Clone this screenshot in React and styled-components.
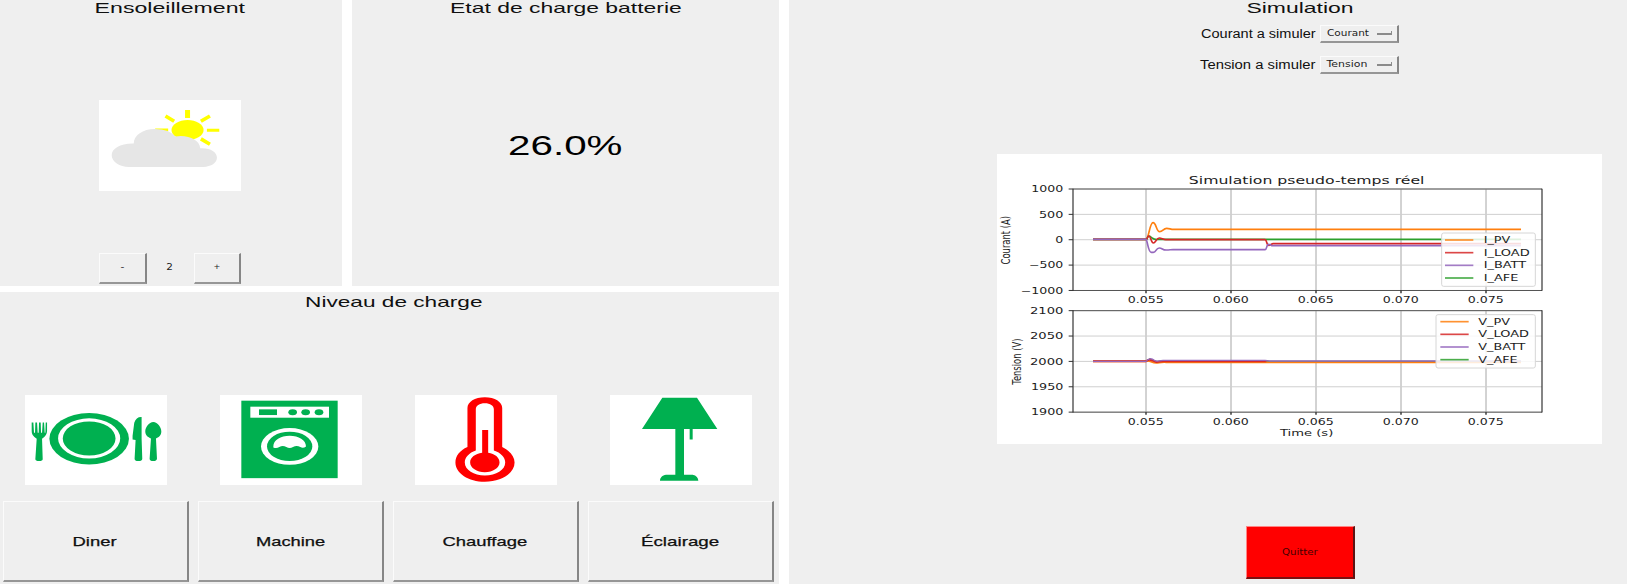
import React, { useLayoutEffect, useRef, useState } from "react";
import styled, { createGlobalStyle } from "styled-components";

const GREEN = "#00b050";
const COLORS = { orange: "#ff7f0e", red: "#d62728", purple: "#9467bd", green: "#2ca02c" };

const GlobalStyle = createGlobalStyle`
  *, *::before, *::after { box-sizing: border-box; }
  body { margin: 0; background: #fff; }
`;

const Screen = styled.main`
  display: grid;
  grid-template-columns: 779.3px 1fr;
  column-gap: 9.7px;
  width: 1627px;
  height: 587px;
  padding-bottom: 3px;
  overflow: hidden;
  background: #fff;
  color: #101010;
  font-family: "Liberation Sans", Arial, sans-serif;
`;

const LeftColumn = styled.div`
  display: grid;
  grid-template-rows: 286px 1fr;
  row-gap: 6px;
`;

const TopRow = styled.div`
  display: grid;
  grid-template-columns: 342px 1fr;
  column-gap: 9.7px;
`;

const Panel = styled.section`
  display: flex;
  flex-direction: column;
  align-items: center;
  background: #efefef;
  min-width: 0;
`;

const SunPanel = styled(Panel)`
  padding-right: 2px;
`;

const SimulationPanel = styled(Panel)`
  padding-left: 184px;
`;

const LoadPanel = styled(Panel)`
  align-items: stretch;
`;

const TextBox = styled.span`
  display: flex;
  justify-content: center;
  align-items: center;
  flex: none;
  width: ${(p) => p.$width}px;
  font-size: ${(p) => p.$size}px;
  line-height: ${(p) => p.$line || p.$size + 2}px;
  white-space: nowrap;
`;

const TextRun = styled.span`
  flex: none;
`;

/* Text drawn with wide letterforms: the run is stretched to fill its width. */
function WideText({ width, size, line, className, children }) {
  const run = useRef(null);
  const [scale, setScale] = useState(1);
  useLayoutEffect(() => {
    setScale(width / run.current.offsetWidth);
  }, [width, size, children]);
  return (
    <TextBox className={className} $width={width} $size={size} $line={line}>
      <TextRun ref={run} style={{ transform: `scaleX(${scale})` }}>{children}</TextRun>
    </TextBox>
  );
}

const Title = styled(WideText)`
  height: 16px;
  padding-bottom: 1.5px;
`;

const SmallText = styled(WideText)`
  font-family: "DejaVu Sans", sans-serif;
  color: ${(p) => p.$color || "#1c1c1c"};
`;

const ButtonText = styled(WideText)`
  padding-top: 1px;
  -webkit-text-stroke: 0.25px #101010;
`;

const Picture = styled.svg`
  display: block;
  flex: none;
  width: 142px;
  height: 90.5px;
  background: #fff;
`;

const SunPicture = styled(Picture)`
  margin-top: 84px;
`;

const Button = styled.button`
  display: flex;
  align-items: center;
  justify-content: center;
  padding: 0;
  border: solid;
  border-width: 1px 2px 2px 1px;
  border-color: #fbfbfb #868686 #969696 #fbfbfb;
  background: #efefef;
  color: inherit;
  font-family: inherit;
`;

const Stepper = styled.div`
  display: flex;
  align-items: center;
  justify-content: space-between;
  width: 142px;
  height: 31px;
  margin-top: 62px;
`;

const StepButton = styled(Button)`
  width: 47.5px;
  height: 31px;
`;

const BatteryValue = styled(WideText)`
  margin: auto 0;
  padding-bottom: 9px;
  color: #000;
`;

const LoadTitle = styled(Title)`
  margin: 2px 0 0 304.5px;
`;

const LoadGrid = styled.div`
  display: grid;
  grid-template-columns: repeat(4, 186px);
  column-gap: 9.2px;
  margin: 84.5px 0 0 2.5px;
`;

const LoadItem = styled.div`
  display: flex;
  flex-direction: column;
  align-items: center;
  gap: 15.5px;
`;

const LoadButton = styled(Button)`
  width: 186px;
  height: 81px;
`;

const OptionRow = styled.label`
  display: flex;
  align-items: center;
  gap: 5px;
  height: 18px;
  margin-top: ${(p) => p.$top}px;
`;

const OptionMenu = styled(Button)`
  justify-content: space-between;
  width: 79px;
  height: 17.5px;
  padding: 0 5px;
`;

const MenuMark = styled.span`
  width: 15px;
  height: 4px;
  margin-bottom: 1px;
  border: solid;
  border-width: 0 1.5px 2px 0;
  border-color: transparent #8b8b8b #8b8b8b transparent;
`;

const Chart = styled.svg`
  display: block;
  flex: none;
  width: 605px;
  height: 290px;
  margin-top: 79.5px;
  background: #fff;
  font-family: "DejaVu Sans", sans-serif;
`;

const QuitButton = styled(Button)`
  width: 109px;
  height: 53px;
  margin-top: 82.5px;
  margin-left: 1px;
  background: #f00;
  border-color: #ff8585 #5c1515 #7a1010 #ff8585;
`;

function SunCloud() {
  return (
    <SunPicture viewBox="298 300 425 272" preserveAspectRatio="none">
      <ellipse cx="563" cy="390" rx="48" ry="30" fill="#ff0" />
      <g stroke="#ff0">
        <path d="M563 330V354" strokeWidth="15" />
        <path d="M466 390H505M621 391H658" strokeWidth="9" />
        <path d="M497 348L523 364M630 348L603 364M603 417L630 433" strokeWidth="11" />
      </g>
      <path
        d="M388 501C359 501 336 485 336 466C336 446 362 430 402 431C402 406 429 387 465 387C493 387 517 396 526 410C563 403 600 420 601 445C630 443 651 456 651 473C651 489 634 501 610 501Z"
        fill="#e6e6e6"
      />
    </SunPicture>
  );
}

function DinnerPicture() {
  return (
    <Picture viewBox="74 342 425 271" preserveAspectRatio="none">
      <g fill={GREEN}>
        <ellipse cx="266" cy="473" rx="119" ry="77" />
        <path d="M94 424H99L101 455H104L105 424H110L112 455H115L116 424H121L122 455H125L127 424H131L133 455H135L136 424H140V450Q140 464 125 473L127 534Q127 540 116 540Q105 540 105 534L109 473Q93 464 94 450Z" />
        <path d="M423 408V472L425 533Q425 540 413 540Q402 540 402 533L405 477L396 475V464L401 425Q407 407 423 408Z" />
        <path d="M458 423C471 423 482 439 482 451C482 463 473 469 466 472L469 533Q468 540 458 540Q447 540 447 533L451 472C442 468 434 462 434 451C434 439 445 423 458 423Z" />
      </g>
      <path
        d="M173 472a93 60 0 1 0 186 0a93 60 0 1 0 -186 0ZM187 472a79 51 0 1 0 158 0a79 51 0 1 0 -158 0Z"
        fill="#fff"
        fillRule="evenodd"
      />
    </Picture>
  );
}

function WasherPicture() {
  return (
    <Picture viewBox="657 342 426 271" preserveAspectRatio="none">
      <rect x="721" y="359" width="289" height="232" fill={GREEN} />
      <rect x="748" y="377" width="236" height="33" fill="#fff" />
      <g fill={GREEN}>
        <rect x="774" y="385" width="54" height="17" />
        <ellipse cx="875" cy="394" rx="13" ry="9" />
        <ellipse cx="914" cy="394" rx="13" ry="9" />
        <ellipse cx="954" cy="394" rx="13" ry="9" />
      </g>
      <ellipse cx="866" cy="496" rx="86" ry="55" fill="#fff" />
      <ellipse cx="866" cy="496" rx="68" ry="44" fill={GREEN} />
      <path d="M817 496C817 477 839 464 866 464C893 464 915 477 915 496Q907 502 898 498Q887 491 876 498Q866 504 856 498Q845 492 835 498Q826 503 817 499Z" fill="#fff" />
    </Picture>
  );
}

function HeatPicture() {
  return (
    <Picture viewBox="74 342 425 271" preserveAspectRatio="none">
      <path
        d="M231 381C231 363 253 349 283 349C313 349 335 363 335 381V498C357 509 372 525 372 544C372 576 333 602 283 602C234 602 195 576 195 544C195 525 208 508 231 498Z"
        fill="#f00"
      />
      <path
        d="M256 385C256 374 267 367 283 367C299 367 310 374 310 385V508C331 515 344 528 344 544C344 566 317 583 283 583C250 583 223 566 223 544C223 528 236 515 256 508Z"
        fill="#fff"
      />
      <path d="M275 447H293V515C313 518 327 529 327 544C327 560 307 573 283 573C259 573 239 560 239 544C239 529 254 518 275 515Z" fill="#f00" />
    </Picture>
  );
}

function LampPicture() {
  return (
    <Picture viewBox="660 342 426 271" preserveAspectRatio="none">
      <path
        d="M817 350H921L982 444H908V475H899V444H882V581H908C919 583 925 590 925 599H810C810 590 817 582 828 581H856V444H756Z"
        fill={GREEN}
      />
    </Picture>
  );
}

const loads = [
  { name: "Diner", width: 44, Art: DinnerPicture },
  { name: "Machine", width: 69, Art: WasherPicture },
  { name: "Chauffage", width: 85, Art: HeatPicture },
  { name: "Éclairage", width: 78, Art: LampPicture },
];

const xTicks = [
  [469, "0.055"],
  [724, "0.060"],
  [979, "0.065"],
  [1234, "0.070"],
  [1489, "0.075"],
];

function ChartText({ x, y, width, size = 25, anchor = "middle", children, ...rest }) {
  return (
    <text x={x} y={y} fontSize={size} textAnchor={anchor} textLength={width} lengthAdjust="spacingAndGlyphs" fill="#1c1c1c" {...rest}>
      {children}
    </text>
  );
}

function Plot({ top, ticks, lines, legend }) {
  const bottom = top + 304.5;
  const step = 76.1;
  return (
    <g>
      {xTicks.map(([x]) => (
        <path key={x} d={`M${x} ${top}V${bottom}`} stroke="#a6a6a6" strokeWidth="3" />
      ))}
      {ticks.map((t, i) => (
        <path key={t.label} d={`M250 ${top + i * step}H1657`} stroke="#cfcfcf" strokeWidth="3" />
      ))}
      <g fill="none" strokeLinejoin="round">
        {lines.map((l, i) => (
          <path key={i} d={l.d} stroke={l.color} strokeWidth={l.width || 5} />
        ))}
      </g>
      <path d={`M250 ${top}H1657M250 ${bottom}H1657`} stroke="#555" strokeWidth="3" />
      <path d={`M250 ${top - 1}V${bottom + 1}M1657 ${top - 1}V${bottom + 1}`} stroke="#2a2a2a" strokeWidth="3.4" />
      {ticks.map((t, i) => (
        <g key={t.label}>
          <path d={`M237 ${top + i * step}H250`} stroke="#333" strokeWidth="3" />
          <ChartText x={221} y={top + i * step + 9.5} width={t.width} anchor="end">{t.label}</ChartText>
        </g>
      ))}
      {xTicks.map(([x, label]) => (
        <g key={x}>
          <path d={`M${x} ${bottom}V${bottom + 8}`} stroke="#222" strokeWidth="4" />
          <ChartText x={x - 1} y={bottom + 37.5} width={108}>{label}</ChartText>
        </g>
      ))}
      <rect x={legend.x} y={legend.y} width={1637 - legend.x} height="160" rx="6" fill="#fff" fillOpacity=".85" stroke="#d6d6d6" strokeWidth="3" />
      {legend.items.map((item, i) => (
        <g key={item.label}>
          <path d={`M${legend.lineX} ${legend.y + 21 + i * 38}h85`} stroke={item.color} strokeWidth="5" opacity=".85" />
          <ChartText x={legend.textX} y={legend.y + 30 + i * 38} width={item.width} size={26} anchor="start">{item.label}</ChartText>
        </g>
      ))}
    </g>
  );
}

const currentPlot = {
  top: 115,
  ticks: [
    { label: "1000", width: 96 },
    { label: "500", width: 73 },
    { label: "0", width: 24 },
    { label: "−500", width: 103 },
    { label: "−1000", width: 128 },
  ],
  lines: [
    { color: COLORS.orange, d: "M310 266H469C477 266 480 216 490 216C500 216 500 243 510 243C519 243 521 233 531 233C541 233 543 237 556 236H1594" },
    { color: COLORS.green, d: "M310 266H471C477 252 480 255 487 262Q495 268 508 266H1594" },
    { color: COLORS.red, d: "M310 266H469C475 266 472 256 477 256C484 256 484 277 491 277C498 277 500 262 509 262C517 262 520 268 530 267H826C832 267 830 284 838 284C845 284 845 277 853 279H1594" },
    { color: COLORS.purple, d: "M310 266H469C474 270 475 305 485 305H491C500 305 498 292 509 292C518 292 519 299 531 298C542 298 544 296 556 297H826C833 297 829 280 838 281C845 281 843 287 853 285H1594" },
  ],
  legend: {
    x: 1356,
    y: 247,
    lineX: 1366,
    textX: 1482,
    items: [
      { label: "I_PV", color: COLORS.orange, width: 80 },
      { label: "I_LOAD", color: COLORS.red, width: 138 },
      { label: "I_BATT", color: COLORS.purple, width: 127 },
      { label: "I_AFE", color: COLORS.green, width: 104 },
    ],
  },
};

const voltagePlot = {
  top: 480,
  ticks: [
    { label: "2100", width: 100 },
    { label: "2050", width: 100 },
    { label: "2000", width: 100 },
    { label: "1950", width: 97 },
    { label: "1900", width: 97 },
  ],
  lines: [
    { color: COLORS.green, d: "M310 632H469L480 625L498 632H1594", width: 4 },
    { color: COLORS.orange, d: "M310 632H469C480 628 484 636 500 637C511 636 515 634 530 635H1594" },
    { color: COLORS.red, d: "M310 632H469C480 622 485 630 500 634C512 634 512 631 526 632H830", width: 6 },
    { color: COLORS.purple, d: "M310 632H469C475 624 484 621 494 629C502 635 506 629 520 629H826L840 631H1594", width: 4 },
  ],
  legend: {
    x: 1339,
    y: 492,
    lineX: 1352,
    textX: 1466,
    items: [
      { label: "V_PV", color: COLORS.orange, width: 95 },
      { label: "V_LOAD", color: COLORS.red, width: 152 },
      { label: "V_BATT", color: COLORS.purple, width: 141 },
      { label: "V_AFE", color: COLORS.green, width: 118 },
    ],
  },
};

function SimulationChart() {
  return (
    <Chart viewBox="22 10 1815 870" preserveAspectRatio="none">
      <ChartText x={951} y={99} width={707} size={33}>Simulation pseudo-temps réel</ChartText>
      <Plot {...currentPlot} />
      <Plot {...voltagePlot} />
      <ChartText x={0} y={0} width={146} size={37} transform="translate(60 268.5) rotate(-90)">Courant (A)</ChartText>
      <ChartText x={0} y={0} width={139} size={38} transform="translate(94 633) rotate(-90)">Tension (V)</ChartText>
      <ChartText x={951} y={857} width={160} size={26}>Time (s)</ChartText>
    </Chart>
  );
}

export default function App() {
  return (
    <>
      <GlobalStyle />
      <Screen>
        <LeftColumn>
          <TopRow>
            <SunPanel>
              <Title width={151} size={15}>Ensoleillement</Title>
              <SunCloud />
              <Stepper>
                <StepButton><SmallText width={4} size={8}>-</SmallText></StepButton>
                <SmallText width={6.5} size={8}>2</SmallText>
                <StepButton><SmallText width={7} size={7}>+</SmallText></StepButton>
              </Stepper>
            </SunPanel>
            <Panel>
              <Title width={232} size={15}>Etat de charge batterie</Title>
              <BatteryValue width={115} size={27}>26.0%</BatteryValue>
            </Panel>
          </TopRow>
          <LoadPanel>
            <LoadTitle width={178} size={15}>Niveau de charge</LoadTitle>
            <LoadGrid>
              {loads.map(({ name, width, Art }) => (
                <LoadItem key={name}>
                  <Art />
                  <LoadButton><ButtonText width={width} size={13}>{name}</ButtonText></LoadButton>
                </LoadItem>
              ))}
            </LoadGrid>
          </LoadPanel>
        </LeftColumn>
        <SimulationPanel>
          <Title width={107} size={15}>Simulation</Title>
          <OptionRow $top={9}>
            <WideText width={115} size={12}>Courant a simuler</WideText>
            <OptionMenu><SmallText width={42} size={8}>Courant</SmallText><MenuMark /></OptionMenu>
          </OptionRow>
          <OptionRow $top={13}>
            <WideText width={115} size={12}>Tension a simuler</WideText>
            <OptionMenu><SmallText width={41} size={8}>Tension</SmallText><MenuMark /></OptionMenu>
          </OptionRow>
          <SimulationChart />
          <QuitButton><SmallText width={36} size={8.5} $color="#400">Quitter</SmallText></QuitButton>
        </SimulationPanel>
      </Screen>
    </>
  );
}
